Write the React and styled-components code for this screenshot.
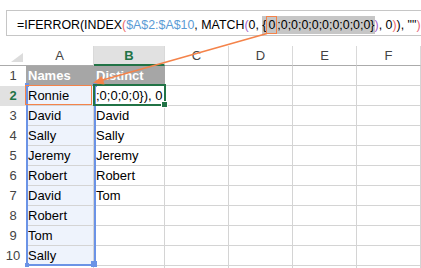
import React from 'react';
import styled, { createGlobalStyle, css } from 'styled-components';

const GlobalStyle = createGlobalStyle`
  html, body {
    margin: 0;
    background: #fff;
    overflow: hidden;
  }
  body {
    font-family: "Liberation Sans", Arial, sans-serif;
  }
`;

const ORANGE = '#f4834a';
const BLUE = '#6b93e6';
const GREEN = '#217346';

const columns = ['A', 'B', 'C', 'D', 'E', 'F'];

// last row is only the top of row 11, cut by the window
const colA = ['Names', 'Ronnie', 'David', 'Sally', 'Jeremy', 'Robert', 'David', 'Robert', 'Tom', 'Sally', ''];
const colB = ['Distinct', ';0;0;0;0}), 0', 'David', 'Sally', 'Jeremy', 'Robert', 'Tom', '', '', '', ''];

const App = () => {
  return (
    <Page>
      <GlobalStyle />
      <FormulaBar>
        <Token>=IFERROR(INDEX</Token>
        <Token $color="#ee6b6b">(</Token>
        <Token $color="#5b9bd5">$A$2:$A$10</Token>
        <Token>, MATCH</Token>
        <Token $color="#a35fcb">(</Token>
        <Token>0, </Token>
        <Selected>{'{'}<Caret>0</Caret>;0;0;0;0;0;0;0;0;0{'}'}</Selected>
        <Token $color="#a35fcb">)</Token>
        <Token>, 0</Token>
        <Token $color="#ee6b6b">)</Token>
        <Token>), ""</Token>
        <Token $color="#e8637a">)</Token>
      </FormulaBar>

      <Sheet>
        <Corner>
          <Triangle />
        </Corner>
        {columns.map((c) => (
          <ColHead key={c} $active={c === 'B'}>{c}</ColHead>
        ))}

        {colA.map((name, i) => (
          <React.Fragment key={i}>
            <RowHead $active={i === 1}>{i < 10 ? i + 1 : ''}</RowHead>
            <Cell $head={i === 0} $range={i > 0 && i < 10}>{name}</Cell>
            <Cell $head={i === 0}>{colB[i]}</Cell>
            <Cell />
            <Cell />
            <Cell />
            <Cell />
          </React.Fragment>
        ))}

        <RangeBox>
          <Grip $corner="tl" />
          <Grip $corner="tr" />
          <Grip $corner="bl" />
          <Grip $corner="br" />
        </RangeBox>
        <RefBox />
        <ActiveCell>
          <FillHandle />
        </ActiveCell>
      </Sheet>

      <Arrow viewBox="0 0 421 268" width="421" height="268">
        <line x1="267" y1="33.5" x2="101" y2="80.5" stroke={ORANGE} strokeWidth="1.6" />
        <polygon points="93,83 104.5,84.6 102,76" fill={ORANGE} />
      </Arrow>
    </Page>
  );
};

const Page = styled.div`
  position: relative;
  width: 421px;
  height: 268px;
  overflow: hidden;
`;

const FormulaBar = styled.div`
  box-sizing: border-box;
  height: 26px;
  margin: 10px -20px 0 6px;
  padding: 4px 0 0 10px;
  border: 1px solid #c6c6c6;
  font-size: 12.4px;
  line-height: 20px;
  white-space: nowrap;
  color: #000;
`;

const Token = styled.span`
  color: ${(p) => p.$color || '#000'};
`;

const Selected = styled.span`
  background: #c6c6c6;
  padding: 2px 0;
`;

const Caret = styled.span`
  display: inline-block;
  line-height: 16px;
  padding: 0 1px;
  border: 1px solid ${ORANGE};
`;

const Sheet = styled.div`
  position: relative;
  margin-top: 10px;
  display: grid;
  grid-template-columns: 26px 68px 71px 64px 64px 64px 64px;
  grid-auto-rows: 20px;
  font-size: 13px;
`;

const Corner = styled.div`
  display: flex;
  align-items: flex-end;
  justify-content: flex-end;
  padding: 0 3px 3px 0;
  border-bottom: 1px solid #ababab;
`;

const Triangle = styled.div`
  width: 0;
  height: 0;
  border-left: 12px solid transparent;
  border-bottom: 9px solid #dcdcdc;
`;

const ColHead = styled.div`
  box-sizing: border-box;
  text-align: center;
  line-height: 19px;
  color: ${(p) => (p.$active ? GREEN : '#444')};
  font-weight: ${(p) => (p.$active ? 700 : 400)};
  background: ${(p) => (p.$active ? '#e1e1e1' : '#fff')};
  border-right: 1px solid #d9d9d9;
  border-bottom: ${(p) => (p.$active ? `2px solid ${GREEN}` : '1px solid #ababab')};
`;

const RowHead = styled.div`
  text-align: center;
  line-height: 19px;
  color: ${(p) => (p.$active ? GREEN : '#444')};
  font-weight: ${(p) => (p.$active ? 700 : 400)};
  background: ${(p) => (p.$active ? '#e1e1e1' : '#fff')};
`;

const Cell = styled.div`
  box-sizing: border-box;
  padding-left: 2px;
  line-height: 19px;
  white-space: nowrap;
  overflow: hidden;
  color: ${(p) => (p.$head ? '#fff' : '#000')};
  font-weight: ${(p) => (p.$head ? 700 : 400)};
  background: ${(p) => (p.$head ? '#a6a6a6' : p.$range ? '#eef3fc' : '#fff')};
  border-right: 1px solid ${(p) => (p.$head ? '#a6a6a6' : '#d4d4d4')};
  border-bottom: 1px solid #d4d4d4;
`;

const RangeBox = styled.div`
  position: absolute;
  box-sizing: border-box;
  left: 26px;
  top: 39px;
  width: 70px;
  height: 181px;
  border: 2px solid ${BLUE};
  border-top-width: 1px;
  pointer-events: none;
`;

const corners = {
  tl: css`left: -3px; top: -3px;`,
  tr: css`right: -3px; top: -3px;`,
  bl: css`left: -3px; bottom: -3px;`,
  br: css`right: -3px; bottom: -3px; width: 6px; height: 6px;`,
};

const Grip = styled.div`
  position: absolute;
  width: 4px;
  height: 4px;
  background: ${BLUE};
  ${(p) => corners[p.$corner]}
`;

const RefBox = styled.div`
  position: absolute;
  box-sizing: border-box;
  left: 25px;
  top: 39px;
  width: 67px;
  height: 20px;
  border: 1px solid ${ORANGE};
`;

const ActiveCell = styled.div`
  position: absolute;
  box-sizing: border-box;
  left: 93px;
  top: 38px;
  width: 73px;
  height: 22px;
  border: 2px solid ${GREEN};
`;

const FillHandle = styled.div`
  position: absolute;
  right: -4px;
  bottom: -4px;
  width: 5px;
  height: 5px;
  background: ${GREEN};
  border: 1px solid #fff;
`;

const Arrow = styled.svg`
  position: absolute;
  left: 0;
  top: 0;
  pointer-events: none;
`;

export default App;
